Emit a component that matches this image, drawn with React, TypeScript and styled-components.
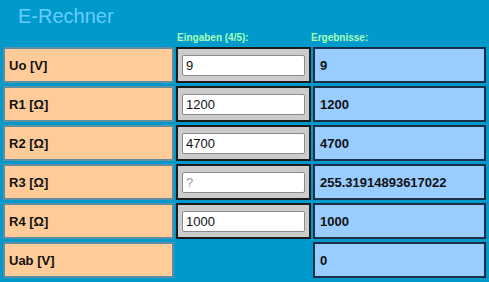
import { Fragment } from 'react'
import styled, { createGlobalStyle } from 'styled-components'

const Global = createGlobalStyle`
  html, body {
    margin: 0;
    padding: 0;
    background: #0099cc;
  }
  body {
    font-family: "Liberation Sans", Arial, sans-serif;
  }
`

const Page = styled.div`
  width: 489px;
  height: 282px;
  background: #0099cc;
  overflow: hidden;
`

const Title = styled.h1`
  margin: 0;
  padding-left: 18px;
  height: 31px;
  line-height: 32px;
  font-size: 20px;
  font-weight: normal;
  color: #66ccff;
`

const Heads = styled.div`
  display: grid;
  grid-template-columns: 171px 135px 173px;
  column-gap: 2px;
  padding: 0 3px;
  height: 13px;
  align-items: center;
`

const Head = styled.div<{ $shift?: number }>`
  font-size: 10px;
  font-weight: bold;
  color: #a6ffb8;
  margin-left: ${({ $shift }) => $shift ?? 1}px;
`

const Grid = styled.div`
  display: grid;
  grid-template-columns: 171px 135px 173px;
  grid-auto-rows: 36px;
  column-gap: 2px;
  row-gap: 3px;
  padding: 3px 3px 0 3px;
`

const Label = styled.div`
  box-sizing: border-box;
  background: #ffcc99;
  border: 2px solid #5e8ea3;
  display: flex;
  align-items: center;
  padding-left: 4px;
  font-size: 13px;
  font-weight: bold;
  color: #111;
`

const InputCell = styled.div<{ $empty?: boolean }>`
  box-sizing: border-box;
  background: ${({ $empty }) => ($empty ? 'transparent' : '#cccccc')};
  border: ${({ $empty }) => ($empty ? 'none' : '2px solid #1b1b1b')};
  display: flex;
  align-items: center;
  padding-left: 4px;
`

const Field = styled.input`
  box-sizing: border-box;
  width: 123px;
  height: 21px;
  margin: 0;
  padding: 0 3px;
  border: 1px solid #8c8c8c;
  border-radius: 2px;
  background: #fff;
  font-family: "Liberation Sans", Arial, sans-serif;
  font-size: 13px;
  color: #111;
  outline: none;
  &::placeholder {
    color: #9a9a9a;
  }
`

const Result = styled.div`
  box-sizing: border-box;
  background: #99ccff;
  border: 2px solid #1c2f48;
  display: flex;
  align-items: center;
  padding-left: 5px;
  font-size: 13px;
  font-weight: bold;
  color: #111;
`

type Row = { label: string; input?: string; result: string }

const rows: Row[] = [
  { label: 'Uo [V]', input: '9', result: '9' },
  { label: 'R1 [Ω]', input: '1200', result: '1200' },
  { label: 'R2 [Ω]', input: '4700', result: '4700' },
  { label: 'R3 [Ω]', input: '', result: '255.31914893617022' },
  { label: 'R4 [Ω]', input: '1000', result: '1000' },
  { label: 'Uab [V]', result: '0' },
]

export default function App() {
  return (
    <Page>
      <Global />
      <Title>E-Rechner</Title>
      <Heads>
        <span />
        <Head>Eingaben (4/5):</Head>
        <Head $shift={-2}>Ergebnisse:</Head>
      </Heads>
      <Grid>
        {rows.map((r) => (
          <Fragment key={r.label}>
            <Label>{r.label}</Label>
            {r.input === undefined ? (
              <InputCell $empty />
            ) : (
              <InputCell>
                <Field defaultValue={r.input} placeholder="?" />
              </InputCell>
            )}
            <Result>{r.result}</Result>
          </Fragment>
        ))}
      </Grid>
    </Page>
  )
}
